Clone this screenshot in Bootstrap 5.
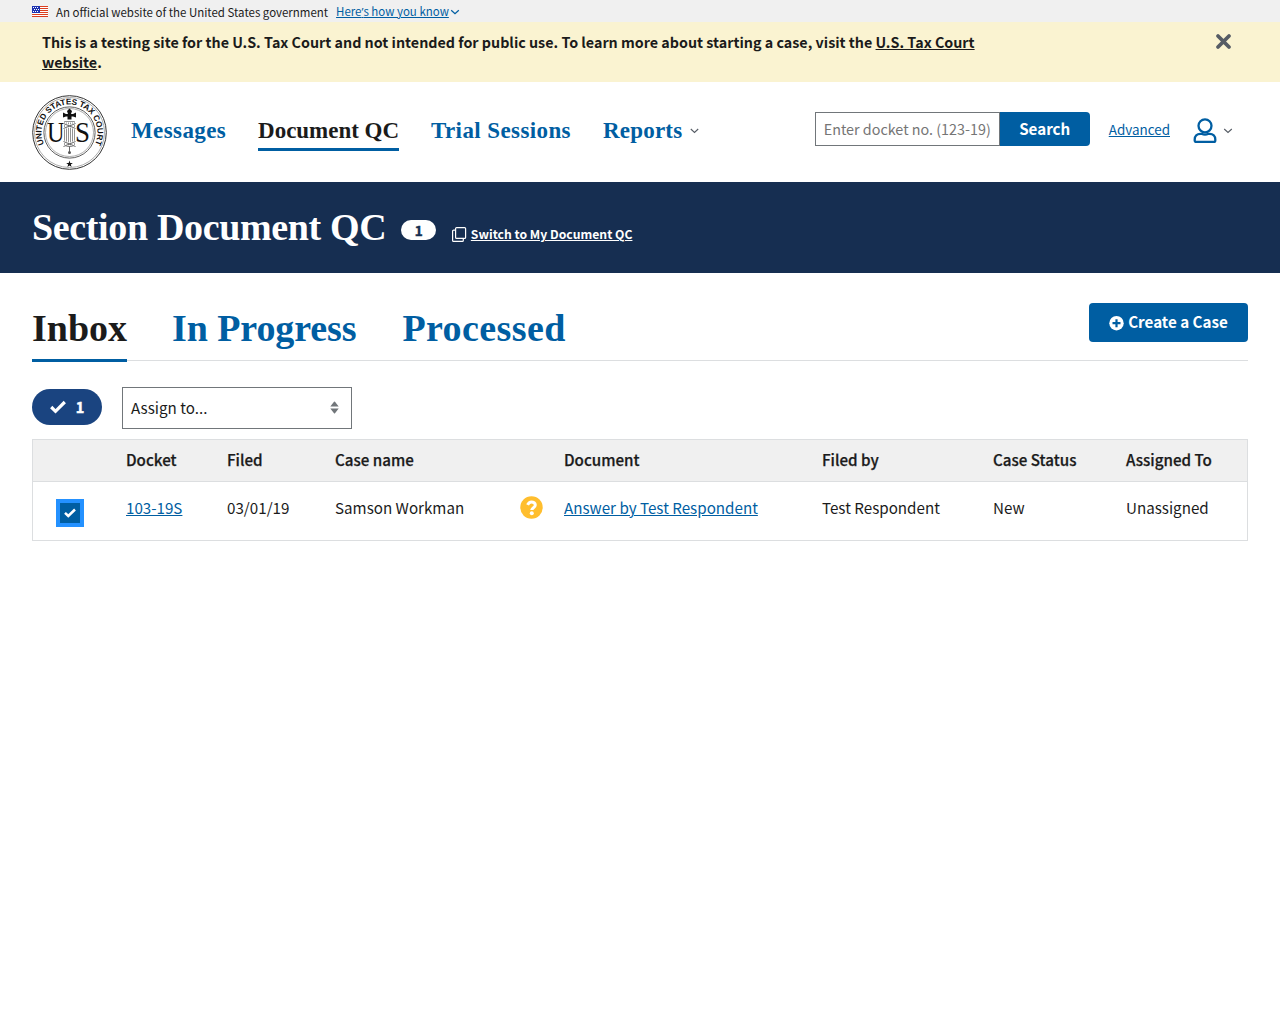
<!DOCTYPE html>
<html lang="en">
<head>
<meta charset="utf-8">
<meta name="viewport" content="width=device-width, initial-scale=1">
<title>Section Document QC | U.S. Tax Court</title>
<link rel="stylesheet" href="https://cdn.jsdelivr.net/npm/bootstrap@5.3.0/dist/css/bootstrap.min.css">
<style>
  :root { --ink: #1b1b1b; --blue: #005ea2; --navy: #162e51; --sans: "Noto Sans CJK SC", "Open Sans", sans-serif; --serif: "Liberation Serif", serif; }
  body { font-family: var(--sans); color: var(--ink); font-size: 15.180px; line-height: 20px; background: #fff; }
  a { color: var(--blue); text-underline-offset: 1px; }
  .gov-bar { height: 22px; background: #f0f0f0; font-size: 11.480px; line-height: 22px; padding: 1px 0 0 32px; }
  .gov-bar svg { flex: none; }
  .apos { font-family: "Open Sans", sans-serif; }
  .test-note { height: 60px; background: #faf3d1; padding: 10px 48px 0 42px; font-size: 14.310px; font-weight: 700; line-height: 20px; }
  .test-note p { width: 960px; }
  .test-note svg { margin-top: 1px; }
  .test-note a { color: var(--ink); }
  .site-head { height: 100px; }
  .seal { margin-top: 1px; }
  .main-nav { font-family: var(--serif); font-weight: 700; font-size: 23px; line-height: 30px; margin-left: 24px; gap: 32px; }
  .main-nav a { text-decoration: none; padding: 2px 0; border-bottom: 3px solid transparent; white-space: nowrap; }
  .main-nav a.current { color: var(--ink); border-color: var(--blue); }
  .main-nav .n1 { letter-spacing: .39px; }
  .main-nav .n2 { letter-spacing: -.03px; }
  .main-nav .n3 { letter-spacing: .4px; }
  .main-nav .n4 { letter-spacing: .2px; }
  .head-tools { margin: -6px 22px 0 0; }
  .docket-input { width: 185px; height: 34px; border: 1px solid #71767a; border-radius: 0; padding: 0 8px 2px; font-size: 14.350px; color: var(--ink); outline: 0; }
  .docket-input::placeholder { color: #757575; opacity: 1; }
  .btn-uswds, .btn-uswds:hover { background: var(--blue); color: #fff; font-weight: 700; font-size: 15.180px; line-height: 20px; border: 0; border-radius: 4px; padding: 0 0 3px; }
  .btn-search { width: 90px; height: 34px; border-radius: 0 4px 4px 0; }
  .adv-link { font-size: 13.450px; margin-left: 19px; }
  .person { margin: 3px 0 0 22px; }
  .user-caret { margin: 3px 0 0 5px; }
  .title-band { height: 91px; background: var(--navy); color: #fff; }
  .title-band h1 { font: 700 38px/48px var(--serif); letter-spacing: -.35px; margin: 21px 15px 0 0; }
  .count-pill { width: 35px; height: 20px; border-radius: 10px; background: #fff; color: var(--navy); font-weight: 700; font-size: 13.500px; line-height: 21px; text-align: center; margin-top: 38px; -webkit-text-stroke: .5px var(--navy); }
  .switch-link { margin: 42px 0 0 16px; color: #fff; font-weight: 700; font-size: 12.200px; line-height: 20px; }
  .switch-link a { color: #fff; margin-left: 3.500px; }
  .tab-row { margin-top: 30px; height: 58px; border-bottom: 1px solid #dcdee0; }
  .tab-row a { font: 700 38px/48px var(--serif); height: 59px; padding-top: 1px; text-decoration: none; border-bottom: 3px solid transparent; }
  .tab-row a.current { color: var(--ink); border-color: var(--blue); }
  .tab-row .t2 { margin-left: 45px; letter-spacing: -.1px; }
  .tab-row .t3 { margin-left: 46px; letter-spacing: .4px; }
  .btn-create { width: 159px; height: 39px; }
  .assign-row { margin-top: 26px; }
  .sel-pill { width: 70px; height: 36px; border-radius: 18px; background: #1a4480; color: #fff; font-weight: 700; font-size: 14.500px; margin-top: 2px; }
  .pill-num { margin-left: 10px; -webkit-text-stroke: .5px #fff; }
  .assign-box { width: 230px; height: 42px; border: 1px solid #71767a; padding: 0 12px 1px 8px; margin-left: 20px; }
  .assign-box span { margin-top: -1px; }
  .qc-table { table-layout: fixed; width: 1216px; border: 1px solid #dcdee0; border-collapse: separate; border-spacing: 0; margin-top: 10px; }
  .qc-table th { background: #f0f0f0; height: 42px; font-weight: 500; -webkit-text-stroke: .25px var(--ink); padding: 0 0 3px 15px; border-bottom: 1px solid #dcdee0; white-space: nowrap; }
  .qc-table td { height: 58px; padding: 15px 0 0 15px; vertical-align: top; white-space: nowrap; }
  .qc-table td.q-cell { padding-top: 13px; }
  .check-box { width: 28px; height: 28px; border: 4px solid #2491ff; background: var(--blue); margin: 2px 0 0 8px; }
</style>
<script src="https://cdn.jsdelivr.net/npm/bootstrap@5.3.0/dist/js/bootstrap.bundle.min.js"></script>
</head>
<body>
<div class="gov-bar d-flex align-items-center">
  <svg width="16" height="11" viewBox="0 0 16 11" shape-rendering="crispEdges"><path fill="#fff" d="M0 0h16v11H0z"/><path fill="#db3e1f" d="M0 0h16v1H0zM0 2h16v1H0zM0 4h16v1H0zM0 6h16v1H0zM0 8h16v1H0zM0 10h16v1H0z"/><path fill="#1e33b1" d="M0 0h8v7H0z"/><path fill="#fff" d="M1 1h1v1H1zM3 1h1v1H3zM5 1h1v1H5zM2 3h1v1H2zM4 3h1v1H4zM6 3h1v1H6zM1 5h1v1H1zM3 5h1v1H3zM5 5h1v1H5z"/></svg>
  <span class="ms-2">An official website of the United States government</span>
  <a class="ms-2" href="#">Here<span class="apos">’</span>s how you know</a>
  <svg width="12" height="10" viewBox="0 0 12 10" fill="none" stroke="#005ea2" stroke-width="1.300"><path d="m2.200 3.300 3.800 3.400L9.800 3.300"/></svg>
</div>
<div class="test-note d-flex justify-content-between align-items-start">
  <p class="mb-0">This is a testing site for the U.S. Tax Court and not intended for public use. To learn more about starting a case, visit the <a href="#">U.S. Tax Court website</a>.</p>
  <svg width="17" height="17" viewBox="0 0 17 17" stroke="#565c65" stroke-width="3.800" stroke-linecap="round"><path d="m3 3 11 11M14 3 3 14"/></svg>
</div>
<header class="site-head d-flex align-items-center px-4">
  <svg class="seal ms-2 flex-shrink-0" width="75" height="75" viewBox="-37.500 -37.500 75 75">
    <circle r="36.800" fill="#fff" stroke="#333" stroke-width="1"/><circle r="35" fill="none" stroke="#777" stroke-width=".6"/>
    <circle r="25.600" fill="none" stroke="#333" stroke-width=".8"/><circle r="24" fill="none" stroke="#777" stroke-width=".6"/>
    <path id="ring" d="M-25 12.600A28 28 0 1 1 25 12.600" fill="none"/>
    <text font-family="Liberation Sans" font-size="8.200" font-weight="700" fill="#111"><textPath href="#ring" textLength="112" startOffset="1">UNITED STATES TAX COURT</textPath></text>
    <text font-family="Liberation Serif" font-size="29" fill="#111" x="-22.500" y="9.500" textLength="17.500" lengthAdjust="spacingAndGlyphs">U</text>
    <text font-family="Liberation Serif" font-size="29" fill="#111" x="5.500" y="9.500" textLength="15" lengthAdjust="spacingAndGlyphs">S</text>
    <path d="M-5-11H5V14H-5z" fill="#fff" stroke="#777" stroke-width=".8"/>
    <path d="M-3-10V14M-1-10V14M1-10V14M3-10V14" stroke="#777" stroke-width=".8"/>
    <path d="M-6-9 6-4M-6-4 6-9M-6 9 6 14M-6 14 6 9" stroke="#fff" stroke-width="2.400"/>
    <path d="M-6-9 6-4M-6-4 6-9M-6 9 6 14M-6 14 6 9M0 14V21" stroke="#555" stroke-width=".9"/>
    <path d="M-6.500-20l3 1.500h2l-1-3L0-24l2.500 2.500-1 3h2l3-1.500v5l-3-1H2v3H-2v-3H-3.500l-3 1z" fill="#111"/><circle cy="20" r="1.500" fill="#555"/>
    <path d="m0 28 .8 2.400h2.500l-2 1.500.8 2.500-2.100-1.500-2.100 1.500.8-2.500-2-1.500h2.500z" fill="#111"/>
  </svg>
  <nav class="main-nav d-flex">
    <a href="#" class="n1">Messages</a><a href="#" class="n2 current">Document QC</a><a href="#" class="n3">Trial Sessions</a>
    <a href="#" class="n4 d-flex align-items-center"><span>Reports</span><svg class="ms-2" width="9" height="8" viewBox="0 0 9 8" fill="none" stroke="#565c65" stroke-width="1.100"><path d="m.8 2 3.700 3.500L8.200 2"/></svg></a>
  </nav>
  <div class="head-tools d-flex align-items-center ms-auto">
    <input class="docket-input" placeholder="Enter docket no. (123-19)" aria-label="Docket number"><button class="btn btn-uswds btn-search">Search</button>
    <a class="adv-link" href="#">Advanced</a>
    <svg class="person" width="25" height="26" viewBox="0 0 25 26" fill="none" stroke="#005ea2" stroke-width="2.300"><circle cx="13" cy="7.800" r="6.500"/><path d="M8.300 15.800h1.200c2.300 1 4.700 1 7 0h1.200c3.300 0 5.600 2.400 5.600 5.700v1c0 .9-.6 1.400-1.500 1.400H4.200c-.9 0-1.500-.5-1.500-1.400v-1c0-3.300 2.300-5.700 5.600-5.700z"/></svg>
    <svg class="user-caret" width="12" height="8" viewBox="0 0 12 8" fill="none" stroke="#565c65" stroke-width="1.100"><path d="m2.200 2 3.800 3.500L9.800 2"/></svg>
  </div>
</header>
<section class="title-band d-flex align-items-start px-4">
  <h1 class="ps-2">Section Document QC</h1>
  <span class="count-pill">1</span>
  <div class="switch-link d-flex align-items-center">
    <svg width="15" height="15" viewBox="0 0 15 15" fill="none" stroke="#fff" stroke-width="1.200"><rect x="3.600" y=".6" width="10" height="10.800" rx="1"/><path d="M3.600 3.200H1.600a1 1 0 0 0-1 1v9.200a1 1 0 0 0 1 1h8.700a1 1 0 0 0 1-1v-2"/></svg>
    <a href="#">Switch to My Document QC</a>
  </div>
</section>
<main class="px-4"><div class="px-2">
  <div class="tab-row d-flex align-items-start">
    <a href="#" class="t1 current">Inbox</a><a href="#" class="t2">In Progress</a><a href="#" class="t3">Processed</a>
    <button class="btn btn-uswds btn-create ms-auto d-flex align-items-center justify-content-center"><svg class="me-1 mt-1" width="15" height="15" viewBox="0 0 15 15"><circle cx="7.500" cy="7.200" r="7.200" fill="#fff"/><path d="M7.500 3.200v8M3.500 7.200h8" stroke="#005ea2" stroke-width="2.200"/></svg>Create a Case</button>
  </div>
  <div class="d-flex align-items-start assign-row">
    <div class="sel-pill d-flex align-items-center justify-content-center"><svg width="16" height="14" viewBox="0 0 16 14" fill="none" stroke="#fff" stroke-width="3.200"><path d="m1.200 7 4.300 4.300L14.800 2"/></svg><span class="pill-num">1</span></div>
    <div class="assign-box d-flex align-items-center justify-content-between"><span>Assign to...</span><svg width="9" height="13" viewBox="0 0 9 13" fill="#71767a"><path d="M.3 5.500 4 .8q.5-.6 1 0l3.700 4.700zM.3 7.500 4 12.200q.5.6 1 0l3.700-4.700z"/></svg></div>
  </div>
  <table class="qc-table">
    <colgroup><col width="78"><col width="101"><col width="108"><col width="185"><col width="44"><col width="258"><col width="171"><col width="133"><col width="136"></colgroup>
    <thead><tr><th></th><th>Docket</th><th>Filed</th><th>Case name</th><th></th><th>Document</th><th>Filed by</th><th>Case Status</th><th>Assigned To</th></tr></thead>
    <tbody><tr>
      <td><div class="check-box d-flex align-items-center justify-content-center"><svg width="12" height="10" viewBox="0 0 12 10" fill="none" stroke="#fff" stroke-width="2.500"><path d="m1 4.800 3.300 3.200L11 1.500"/></svg></div></td>
      <td><a href="#">103-19S</a></td><td>03/01/19</td><td>Samson Workman</td>
      <td class="q-cell"><svg width="23" height="23" viewBox="0 0 23 23"><circle cx="11.500" cy="11.500" r="11.200" fill="#ffbe2e"/><path d="M7.600 8.900c.9-2.100 2.100-3 3.900-3 2 0 3.800 1.300 3.800 3.200 0 2.700-3.500 2.600-3.500 5" fill="none" stroke="#fff" stroke-width="3"/><circle cx="11.800" cy="17.300" r="2" fill="#fff"/></svg></td>
      <td><a href="#">Answer by Test Respondent</a></td><td>Test Respondent</td><td>New</td><td>Unassigned</td>
    </tr></tbody>
  </table>
</div></main>
</body>
</html>
